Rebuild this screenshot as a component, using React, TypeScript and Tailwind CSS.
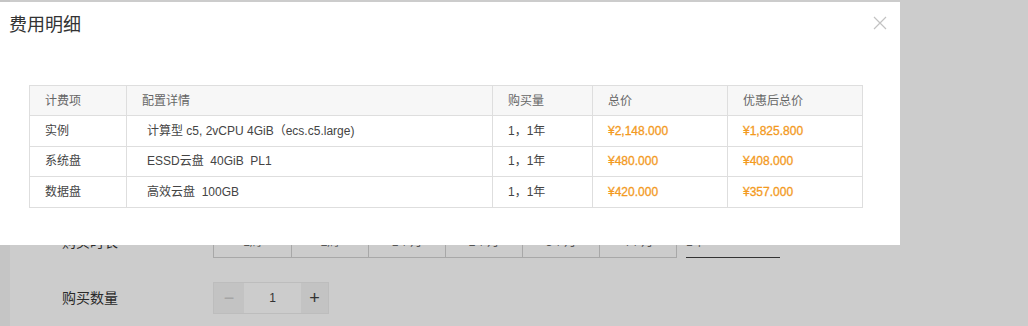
const rows = [
  { item: "实例", spec: "计算型 c5, 2vCPU 4GiB（ecs.c5.large)", qty: "1，1年", total: "¥2,148.000", final: "¥1,825.800" },
  { item: "系统盘", spec: "ESSD云盘  40GiB  PL1", qty: "1，1年", total: "¥480.000", final: "¥408.000" },
  { item: "数据盘", spec: "高效云盘  100GB", qty: "1，1年", total: "¥420.000", final: "¥357.000" },
];

const durations = ["1周", "2周", "1个月", "2个月", "3个月", "4个月"];

function CloseIcon() {
  return (
    <svg width="14" height="14" viewBox="0 0 14 14" className="block">
      <path d="M1 1 L13 13 M13 1 L1 13" stroke="#c2c2c2" strokeWidth="1.2" fill="none" />
    </svg>
  );
}

export default function App() {
  return (
    <div
      className="relative h-[326px] w-[1028px] overflow-hidden bg-[#cccccc] text-[#333]"
      style={{ fontFamily: '"Liberation Sans", "Noto Sans CJK SC", sans-serif' }}
    >
      {/* page behind the overlay */}
      <div className="flex h-full">
        <div className="w-[10px] shrink-0 bg-[#c5c5c5]" />
        <div className="flex flex-col gap-6 pl-[52px] pt-[226px]">
          <div className="flex items-center">
            <span className="w-[151px] text-sm text-[#2a2a2a]">购买时长</span>
            <div className="flex h-8 border border-[#a8a8a8]">
              {durations.map((d, i) => (
                <div
                  key={d}
                  className={`flex w-[77px] items-center justify-center text-xs text-[#555] ${i > 0 ? "border-l border-[#a8a8a8]" : ""}`}
                >
                  {d}
                </div>
              ))}
            </div>
            <div className="ml-[9px] flex h-8 w-[94px] items-center border-b border-[#333] text-xs text-[#555]">
              1年
            </div>
          </div>
          <div className="flex items-center">
            <span className="w-[151px] text-sm text-[#2a2a2a]">购买数量</span>
            <div className="flex h-8 border border-[#bdbdbd]">
              <div className="flex w-[30px] items-center justify-center bg-[#c3c3c3] text-lg text-[#a5a5a5]">−</div>
              <div className="flex w-[57px] items-center justify-center text-xs text-[#333]">1</div>
              <div className="flex w-[27px] items-center justify-center bg-[#c3c3c3] text-lg text-[#333]">+</div>
            </div>
          </div>
        </div>
      </div>

      {/* modal */}
      <div className="absolute left-0 top-[2px] h-[243px] w-[900px] bg-white">
        <div className="flex items-start justify-between pl-[9px] pr-[13px] pt-[11px]">
          <h2 className="text-lg leading-6 text-[#333]">费用明细</h2>
          <div className="pt-[3px]">
            <CloseIcon />
          </div>
        </div>
        <div className="pl-[29px] pt-[48px]">
          <table className="w-[833px] table-fixed border-collapse text-xs">
            <colgroup>
              <col className="w-[97px]" />
              <col className="w-[366px]" />
              <col className="w-[100px]" />
              <col className="w-[135px]" />
              <col className="w-[135px]" />
            </colgroup>
            <thead>
              <tr className="h-[30px] bg-[#f7f7f7] text-left text-[#666]">
                <th className="border border-[#dedede] pl-[15px] font-normal">计费项</th>
                <th className="border border-[#dedede] pl-[15px] font-normal">配置详情</th>
                <th className="border border-[#dedede] pl-[15px] font-normal">购买量</th>
                <th className="border border-[#dedede] pl-[15px] font-normal">总价</th>
                <th className="border border-[#dedede] pl-[15px] font-normal">优惠后总价</th>
              </tr>
            </thead>
            <tbody>
              {rows.map((r) => (
                <tr key={r.item} className="h-[30.5px] text-[#444]">
                  <td className="border border-[#dedede] pl-[15px]">{r.item}</td>
                  <td className="whitespace-pre border border-[#dedede] pl-[20px]">{r.spec}</td>
                  <td className="border border-[#dedede] pl-[15px]">{r.qty}</td>
                  <td className="border border-[#dedede] pl-[15px] text-[#f39a1e] [-webkit-text-stroke:0.3px_#f39a1e]">{r.total}</td>
                  <td className="border border-[#dedede] pl-[15px] text-[#f39a1e] [-webkit-text-stroke:0.3px_#f39a1e]">{r.final}</td>
                </tr>
              ))}
            </tbody>
          </table>
        </div>
      </div>
    </div>
  );
}
